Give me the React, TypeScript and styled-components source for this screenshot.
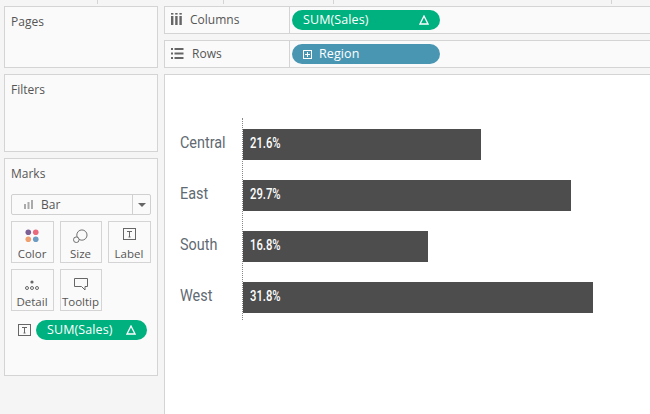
import styled, { createGlobalStyle } from 'styled-components'

const GlobalStyle = createGlobalStyle`
  html, body {
    margin: 0;
    padding: 0;
    background: #f5f5f5;
    overflow: hidden;
  }
  * { box-sizing: border-box; }
`;

const Page = styled.div`
  width: 650px;
  height: 414px;
  overflow: hidden;
  font-family: "Open Sans", "Liberation Sans", sans-serif;
  font-size: 12px;
  color: #555;
`;

const TopStrip = styled.div`
  height: 6px;
  display: flex;
  align-items: flex-start;
`;

const Tick = styled.span<{ $gap: number }>`
  width: 1px;
  height: 4px;
  background: #d4d4d4;
  margin-left: ${props => props.$gap}px;
`;

const Workspace = styled.div`
  display: flex;
  gap: 6px;
  padding-left: 4px;
`;

const Sidebar = styled.div`
  width: 154px;
  display: flex;
  flex-direction: column;
  gap: 6px;
`;

const Card = styled.section<{ $height: number }>`
  height: ${props => props.$height}px;
  background: #fafafa;
  border: 1px solid #d4d4d4;
  padding: 6px;
`;

const CardTitle = styled.div`
  line-height: 17px;
`;

const MarkSelect = styled.div`
  width: 140px;
  height: 21px;
  margin-top: 12px;
  display: flex;
  align-items: center;
  border: 1px solid #d0d0d0;
  border-radius: 2px;
  background: #fafafa;
`;

const SelectValue = styled.div`
  flex: 1;
  display: flex;
  align-items: center;
  gap: 7px;
  padding-left: 12px;
`;

const SelectArrow = styled.div`
  width: 18px;
  height: 100%;
  display: flex;
  align-items: center;
  justify-content: center;
  border-left: 1px solid #d0d0d0;
`;

const MarkGrid = styled.div`
  display: grid;
  grid-template-columns: 43px 42px 43px;
  grid-auto-rows: 42px;
  column-gap: 6px;
  row-gap: 6px;
  margin-top: 6px;
`;

const MarkButton = styled.div`
  display: flex;
  flex-direction: column;
  align-items: center;
  justify-content: flex-end;
  border: 1px solid #d4d4d4;
  font-size: 11.5px;
  line-height: 14px;
  padding: 0 1px 1px 0;
`;

const MarkIcon = styled.svg`
  display: block;
  margin-bottom: 4px;
`;

const MarkField = styled.div`
  display: flex;
  align-items: center;
  gap: 5px;
  margin-top: 9px;
  padding-left: 7px;
`;

const Pill = styled.div<{ $color: string; $width: number }>`
  width: ${props => props.$width}px;
  height: 20px;
  border-radius: 10px;
  background: ${props => props.$color};
  color: #fff;
  display: flex;
  align-items: center;
  padding: 0 11px;
  font-size: 12.5px;
  letter-spacing: 0.1px;
`;

const PillText = styled.span`
  flex: 1;
  margin-bottom: 2px;
`;

const PillGlyph = styled.svg`
  margin-right: 7px;
`;

const Main = styled.div`
  flex: 1;
  display: flex;
  flex-direction: column;
  gap: 6px;
`;

const Shelf = styled.div`
  height: 28px;
  display: flex;
  background: #fafafa;
  border-top: 1px solid #d4d4d4;
  border-bottom: 1px solid #d4d4d4;
  border-left: 1px solid #d4d4d4;
`;

const ShelfLabel = styled.div`
  width: 125px;
  display: flex;
  align-items: center;
  gap: 8px;
  padding: 0 0 2px 6px;
  border-right: 1px solid #d4d4d4;
`;

const ShelfBody = styled.div`
  flex: 1;
  display: flex;
  align-items: center;
  padding-left: 2px;
`;

const ChartPane = styled.div`
  height: 340px;
  background: #fff;
  border-top: 1px solid #d4d4d4;
  border-left: 1px solid #d4d4d4;
  padding: 43px 0 0 15px;
  display: flex;
`;

const CategoryAxis = styled.div`
  width: 62px;
  display: flex;
  flex-direction: column;
  gap: 20px;
  padding-top: 11px;
`;

const Category = styled.div`
  height: 31px;
  line-height: 28px;
  font-family: "Roboto", "Liberation Sans", sans-serif;
  font-size: 16px;
  color: #5f6a72;
  transform: scaleX(0.9);
  transform-origin: left center;
`;

const BarColumn = styled.div`
  height: 202px;
  display: flex;
  flex-direction: column;
  gap: 20px;
  padding-top: 11px;
  border-left: 1px dotted #888;
`;

const Bar = styled.div<{ $width: number }>`
  width: ${props => props.$width}px;
  height: 31px;
  background: #4d4d4d;
  display: flex;
  align-items: center;
  padding: 0 0 3px 7px;
`;

const BarValue = styled.span`
  font-family: "Roboto", "Liberation Sans", sans-serif;
  font-size: 15px;
  font-weight: 500;
  color: #fff;
  transform: scaleX(0.75);
  transform-origin: left center;
`;

const bars = [
  { region: 'Central', share: '21.6%', width: 238 },
  { region: 'East', share: '29.7%', width: 328 },
  { region: 'South', share: '16.8%', width: 185 },
  { region: 'West', share: '31.8%', width: 350 },
];

const DeltaIcon = () => (
  <svg width="10" height="10" viewBox="0 0 10 10" fill="none" stroke="#fff" strokeWidth="1.3">
    <path d="M5 1 L9 9 H1 Z" />
  </svg>
);

const TextBoxIcon = ({ size = 13 }: { size?: number }) => (
  <svg width={size} height={size - 1} viewBox="0 0 13 12" fill="none" stroke="#666">
    <rect x="0.5" y="0.5" width="12" height="11" />
    <path d="M4 3.5 H9 M6.5 3.5 V9 M5.5 9 H7.5" />
  </svg>
);

const App = () => {
  return (
    <Page>
      <GlobalStyle />
      <TopStrip>
        <Tick $gap={97} />
        <Tick $gap={125} />
        <Tick $gap={109} />
        <Tick $gap={277} />
      </TopStrip>
      <Workspace>
        <Sidebar>
          <Card $height={62}>
            <CardTitle>Pages</CardTitle>
          </Card>
          <Card $height={78}>
            <CardTitle>Filters</CardTitle>
          </Card>
          <Card $height={218}>
            <CardTitle>Marks</CardTitle>
            <MarkSelect>
              <SelectValue>
                <svg width="10" height="9" viewBox="0 0 10 9" fill="#aaa">
                  <rect x="0" y="4" width="2" height="5" />
                  <rect x="3.5" y="2" width="2" height="7" />
                  <rect x="7" y="0" width="2" height="9" />
                </svg>
                Bar
              </SelectValue>
              <SelectArrow>
                <svg width="8" height="4" viewBox="0 0 8 4" fill="#666">
                  <path d="M0 0 H8 L4 4 Z" />
                </svg>
              </SelectArrow>
            </MarkSelect>
            <MarkGrid>
              <MarkButton>
                <MarkIcon width="15" height="14" viewBox="0 0 16 15">
                  <circle cx="3.5" cy="3.5" r="3" fill="#7b5f95" />
                  <circle cx="11.5" cy="3.5" r="3" fill="#e96a7c" />
                  <circle cx="3.5" cy="11" r="3" fill="#f0a070" />
                  <circle cx="11.5" cy="11" r="3" fill="#6c9cc4" />
                </MarkIcon>
                Color
              </MarkButton>
              <MarkButton>
                <MarkIcon width="15" height="14" viewBox="0 0 16 15" fill="none" stroke="#666">
                  <circle cx="9.5" cy="6.5" r="5.5" />
                  <circle cx="3.5" cy="11.5" r="3" fill="#fafafa" />
                </MarkIcon>
                Size
              </MarkButton>
              <MarkButton>
                <MarkIcon as="div">
                  <TextBoxIcon />
                </MarkIcon>
                Label
              </MarkButton>
              <MarkButton>
                <MarkIcon width="14" height="11" viewBox="0 0 14 11" fill="none" stroke="#666">
                  <circle cx="7" cy="2" r="1.6" fill="#666" stroke="none" />
                  <circle cx="2" cy="8" r="1.5" />
                  <circle cx="7" cy="8" r="1.5" />
                  <circle cx="12" cy="8" r="1.5" />
                </MarkIcon>
                Detail
              </MarkButton>
              <MarkButton>
                <MarkIcon width="14" height="13" viewBox="0 0 14 13" fill="none" stroke="#666">
                  <path d="M0.5 0.5 H13.5 V8.5 H11 V12 L7.5 8.5 H0.5 Z" />
                </MarkIcon>
                Tooltip
              </MarkButton>
            </MarkGrid>
            <MarkField>
              <TextBoxIcon />
              <Pill $color="#00b180" $width={111}>
                <PillText>SUM(Sales)</PillText>
                <DeltaIcon />
              </Pill>
            </MarkField>
          </Card>
        </Sidebar>
        <Main>
          <Shelf>
            <ShelfLabel>
              <svg width="11" height="12" viewBox="0 0 11 12" fill="#666">
                <rect x="0" y="3" width="2.4" height="9" />
                <rect x="4.2" y="3" width="2.4" height="9" />
                <rect x="8.4" y="3" width="2.4" height="9" />
                <rect x="0" y="0" width="2.4" height="1.6" />
                <rect x="4.2" y="0" width="2.4" height="1.6" />
                <rect x="8.4" y="0" width="2.4" height="1.6" />
              </svg>
              Columns
            </ShelfLabel>
            <ShelfBody>
              <Pill $color="#00b180" $width={148}>
                <PillText>SUM(Sales)</PillText>
                <DeltaIcon />
              </Pill>
            </ShelfBody>
          </Shelf>
          <Shelf>
            <ShelfLabel>
              <svg width="13" height="11" viewBox="0 0 13 11" fill="#666">
                <rect x="0" y="0" width="2" height="2" />
                <rect x="3.5" y="0" width="9" height="2" />
                <rect x="0" y="4.5" width="2" height="2" />
                <rect x="3.5" y="4.5" width="9" height="2" />
                <rect x="0" y="9" width="2" height="2" />
                <rect x="3.5" y="9" width="9" height="2" />
              </svg>
              Rows
            </ShelfLabel>
            <ShelfBody>
              <Pill $color="#4996b2" $width={148}>
                <PillGlyph width="9" height="9" viewBox="0 0 9 9" fill="none" stroke="#fff">
                  <rect x="0.5" y="0.5" width="8" height="8" />
                  <path d="M4.5 2 V7 M2 4.5 H7" />
                </PillGlyph>
                <PillText>Region</PillText>
              </Pill>
            </ShelfBody>
          </Shelf>
          <ChartPane>
            <CategoryAxis>
              {bars.map(item => (
                <Category key={item.region}>{item.region}</Category>
              ))}
            </CategoryAxis>
            <BarColumn>
              {bars.map(item => (
                <Bar key={item.region} $width={item.width}>
                  <BarValue>{item.share}</BarValue>
                </Bar>
              ))}
            </BarColumn>
          </ChartPane>
        </Main>
      </Workspace>
    </Page>
  )
}

export default App;
